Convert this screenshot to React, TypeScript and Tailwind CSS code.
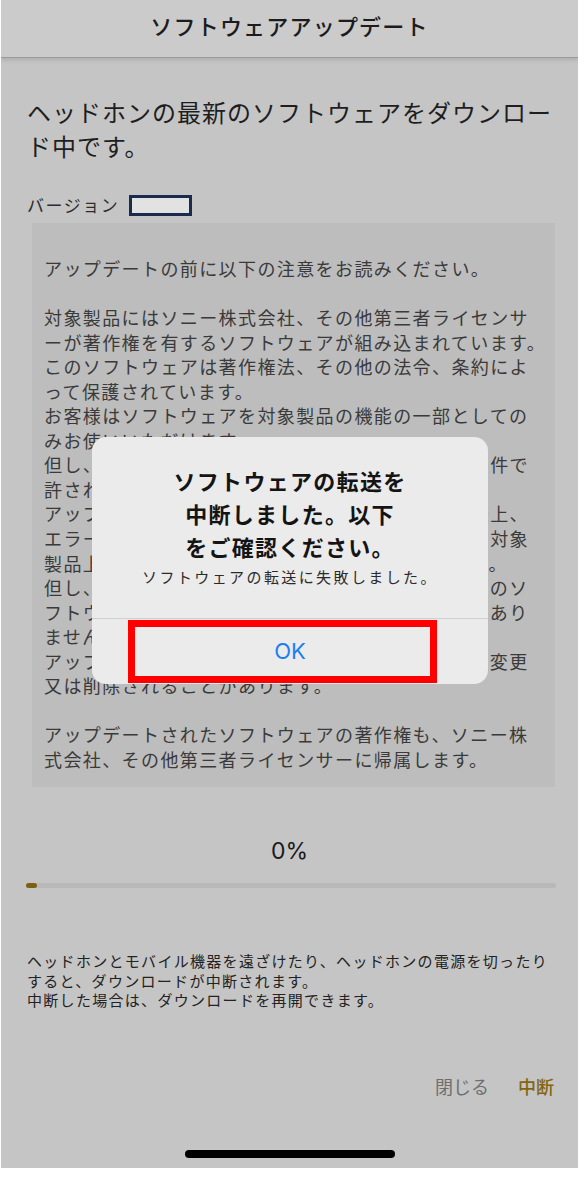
import { FC } from "react";

const noticeLines: string[] = [
    "アップデートの前に以下の注意をお読みください。",
    "",
    "対象製品にはソニー株式会社、その他第三者ライセンサ",
    "ーが著作権を有するソフトウェアが組み込まれています。",
    "このソフトウェアは著作権法、その他の法令、条約によ",
    "って保護されています。",
    "お客様はソフトウェアを対象製品の機能の一部としての",
    "みお使いいただけます。",
    "但し、一部のソフトウェアは提供元の定める使用条件で",
    "許された範囲でご使用ください。",
    "アップデートを中断した場合、ソフトウェアの仕様上、",
    "エラーが発生し、ソフトウェアが正常に動作しない対象",
    "製品上でご使用いただけなくなる場合がございます。",
    "但し、アップデートを再開することにより対象製品のソ",
    "フトウェアを元の状態に戻すことができるので問題あり",
    "ません。",
    "アップデートにより対象製品の機能や仕様が追加、変更",
    "又は削除されることがあります。",
    "",
    "アップデートされたソフトウェアの著作権も、ソニー株",
    "式会社、その他第三者ライセンサーに帰属します。",
];

const footerLines: string[] = [
    "ヘッドホンとモバイル機器を遠ざけたり、ヘッドホンの電源を切ったり",
    "すると、ダウンロードが中断されます。",
    "中断した場合は、ダウンロードを再開できます。",
];

const AlertDialog: FC = () => {
    return (
        <div className="absolute left-[91px] top-[437px] w-[396px] h-[247px] rounded-[14px] bg-[#ebebeb] flex flex-col">
            <div className="h-[182px] pt-[27px] flex flex-col items-center border-b border-[#cfcfcf]">
                <div className="text-[22px] leading-[33px] font-bold tracking-[1.3px] text-[#141414] text-center">
                    <div>ソフトウェアの転送を</div>
                    <div>中断しました。以下</div>
                    <div>をご確認ください。</div>
                </div>
                <p className="mt-[4px] text-[15px] leading-[20px] tracking-[2.4px] text-[#2a2a2a]">
                    ソフトウェアの転送に失敗しました。
                </p>
            </div>
            <div className="relative flex-1 flex items-center justify-center">
                <span className="font-['Inter',sans-serif] text-[22px] text-[#1a7ff2]">OK</span>
                <div className="absolute left-[36px] top-[1px] w-[309px] h-[63px] border-[7px] border-[#ff0000]" />
            </div>
        </div>
    );
};

export default function App() {
    return (
        <div className="w-[586px] h-[1177px] bg-white font-['Noto_Sans_CJK_JP','Noto_Sans',sans-serif]">
            <div className="ml-px w-[577px] h-[1168px] bg-[#c5c5c5] relative flex flex-col overflow-hidden">
                <header className="relative h-[58px] shrink-0 bg-[#cbcbcb] border-b border-[#9c9c9c] shadow-[0_2px_4px_rgba(0,0,0,0.12)] flex items-center justify-center pb-[6px]">
                    <h1 className="text-[22px] font-medium tracking-[1.2px] text-[#1c1c1c]">ソフトウェアアップデート</h1>
                </header>

                <h2 className="mt-[37px] px-[26px] text-[24px] leading-[34px] tracking-[1px] text-[#1e1e1e]">
                    <div>ヘッドホンの最新のソフトウェアをダウンロー</div>
                    <div>ド中です。</div>
                </h2>

                <div className="mt-[30px] px-[26px] flex items-center h-[24px]">
                    <span className="text-[17px] tracking-[1.5px] text-[#2c2c2c]">バージョン</span>
                    <span className="ml-[10px] w-[63px] h-[21px] border-[3px] border-[#1b2b4e] bg-[#e2e2e2]" />
                </div>

                <div className="mt-[6px] ml-[31px] w-[523px] bg-[#bdbdbd] pt-[33px] pb-[16px] pl-[12px] text-[18px] leading-[24.55px] tracking-[1.4px] text-[#3a3a3a]">
                    {noticeLines.map((line, i) => (
                        <div key={i} className="whitespace-nowrap h-[24.55px]">
                            {line}
                        </div>
                    ))}
                </div>

                <div className="mt-[49px] text-center font-['Inter',sans-serif] text-[23px] leading-[30px] text-[#1a1a1a]">0%</div>

                <div className="mt-[17px] ml-[25px] w-[530px] h-[5px] rounded-full bg-[#b9b9b9]">
                    <div className="w-[11px] h-[5px] rounded-full bg-[#7d6012]" />
                </div>

                <div className="mt-[63px] px-[26px] text-[15px] leading-[19.5px] tracking-[1.3px] text-[#222222]">
                    {footerLines.map((line, i) => (
                        <div key={i} className="whitespace-nowrap">
                            {line}
                        </div>
                    ))}
                </div>

                <div className="mt-[64px] pr-[24px] flex justify-end items-center gap-[29px] text-[18px] leading-[24px]">
                    <button className="text-[#6e6e6e]">閉じる</button>
                    <button className="text-[#84650f] font-medium">中断</button>
                </div>

                <div className="mt-auto mb-[10px] mx-auto w-[210px] h-[8px] rounded-full bg-black" />

                <AlertDialog />
            </div>
        </div>
    );
}
